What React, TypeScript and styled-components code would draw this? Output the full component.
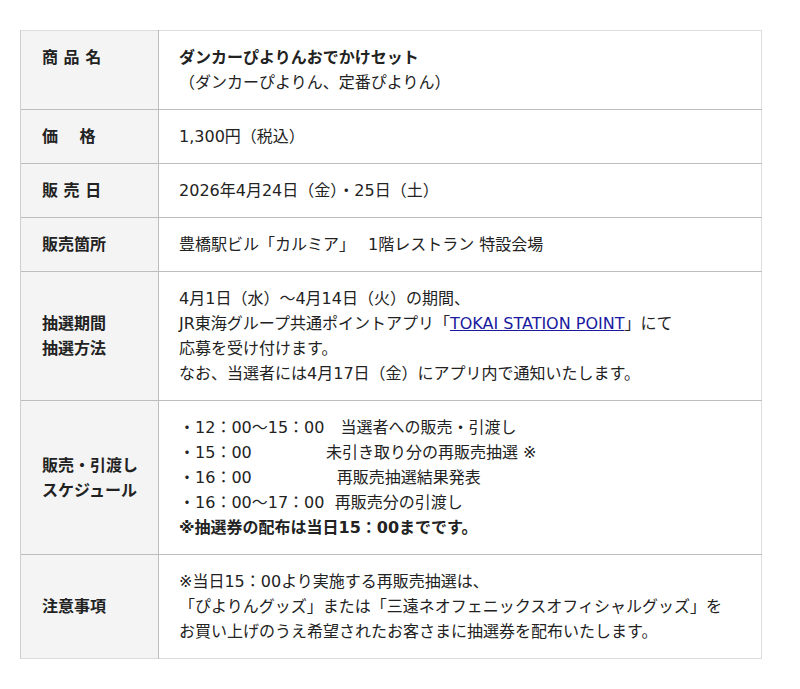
import React from "react";
import styled, { createGlobalStyle } from "styled-components";

const GlobalStyle = createGlobalStyle`
  body {
    margin: 0;
    background: #fff;
    color: #222;
    font-family: "DejaVu Sans", "Noto Sans CJK JP", sans-serif;
  }
`;

const Page = styled.div`
  padding: 30px 38px 30px 20px;
`;

const Table = styled.table`
  width: 742px;
  border-collapse: collapse;
  border: 1px solid #dcdcdc;
  font-size: 16px;
  line-height: 25px;
`;

const Row = styled.tr<{ $last?: boolean }>`
  border-bottom: 1px solid ${(p) => (p.$last ? "#dcdcdc" : "#bdbdbd")};
`;

const Label = styled.th<{ $top?: boolean }>`
  width: 96px;
  padding: 14px 20px 14px 21px;
  background: #f4f4f4;
  border-right: 1px solid #bdbdbd;
  border-left: 1px solid #cfcfcf;
  text-align: left;
  vertical-align: ${(p) => (p.$top ? "top" : "middle")};
  font-weight: bold;
  white-space: nowrap;
`;

const Cell = styled.td`
  padding: 14px 20px;
  vertical-align: middle;
  white-space: nowrap;
`;

const Strong = styled.strong`
  font-weight: bold;
`;

const Anchor = styled.a`
  color: #1a1aa0;
  text-decoration: underline;
`;

const Line = styled.div`
  white-space: pre;
`;

export default function App() {
  return (
    <Page>
      <GlobalStyle />
      <Table>
        <tbody>
          <Row>
            <Label $top>商 品 名</Label>
            <Cell>
              <Line>
                <Strong>ダンカーぴよりんおでかけセット</Strong>
              </Line>
              <Line>（ダンカーぴよりん、定番ぴよりん）</Line>
            </Cell>
          </Row>
          <Row>
            <Label>価　 格</Label>
            <Cell>1,300円（税込）</Cell>
          </Row>
          <Row>
            <Label>販 売 日</Label>
            <Cell>2026年4月24日（金）・25日（土）</Cell>
          </Row>
          <Row>
            <Label>販売箇所</Label>
            <Cell>{"豊橋駅ビル「カルミア」\u3000\u00a01階レストラン 特設会場"}</Cell>
          </Row>
          <Row>
            <Label>
              抽選期間
              <br />
              抽選方法
            </Label>
            <Cell>
              <Line>4月1日（水）〜4月14日（火）の期間、</Line>
              <Line>
                JR東海グループ共通ポイントアプリ「<Anchor href="#">TOKAI STATION POINT</Anchor>」にて
              </Line>
              <Line>応募を受け付けます。</Line>
              <Line>なお、当選者には4月17日（金）にアプリ内で通知いたします。</Line>
            </Cell>
          </Row>
          <Row>
            <Label>
              販売・引渡し
              <br />
              スケジュール
            </Label>
            <Cell>
              <Line>{"・12：00〜15：00\u3000当選者への販売・引渡し"}</Line>
              <Line>{"・15：00\u3000\u3000\u3000\u3000  未引き取り分の再販売抽選 ※"}</Line>
              <Line>{"・16：00\u3000\u3000\u3000\u3000\u3000 再販売抽選結果発表"}</Line>
              <Line>{"・16：00〜17：00  再販売分の引渡し"}</Line>
              <Line>
                <Strong>※抽選券の配布は当日15：00までです。</Strong>
              </Line>
            </Cell>
          </Row>
          <Row $last>
            <Label>注意事項</Label>
            <Cell>
              <Line>※当日15：00より実施する再販売抽選は、</Line>
              <Line>「ぴよりんグッズ」または「三遠ネオフェニックスオフィシャルグッズ」を</Line>
              <Line>お買い上げのうえ希望されたお客さまに抽選券を配布いたします。</Line>
            </Cell>
          </Row>
        </tbody>
      </Table>
    </Page>
  );
}
